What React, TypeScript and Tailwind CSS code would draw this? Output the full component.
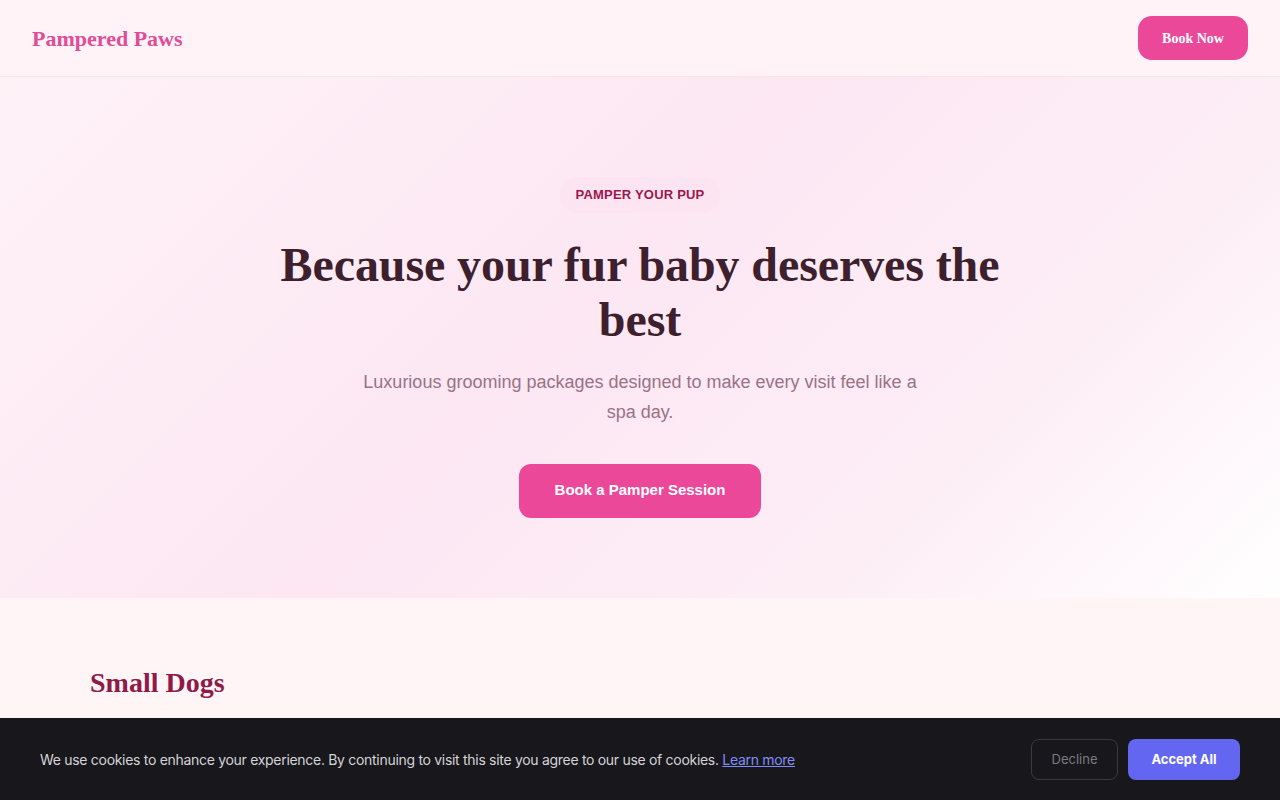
export default function App() {
  const serif = { fontFamily: '"Liberation Serif", "Times New Roman", serif' };
  const sans = { fontFamily: '"Liberation Sans", Arial, sans-serif' };
  return (
    <div className="min-h-screen w-full bg-[#fff5f7] relative overflow-hidden" style={sans}>
      <header className="h-[77px] flex items-center justify-between px-8 bg-[#fff3f7] border-b border-[#f6e6ec]">
        <div className="text-[22px] font-bold text-[#e04d97]" style={serif}>Pampered Paws</div>
        <button className="h-[44px] w-[110px] rounded-[14px] bg-[#ec4899] text-white text-[14px] font-bold" style={serif}>Book Now</button>
      </header>
      <section className="h-[521px] flex flex-col items-center pt-[100px] bg-[linear-gradient(135deg,#fff2f7_0%,#fce7f3_45%,#fdeef6_75%,#ffffff_100%)]">
        <div className="px-4 py-[8px] rounded-full bg-[#fce5f0] text-[13px] font-bold text-[#9d174d] tracking-[0.2px]">PAMPER YOUR PUP</div>
        <h1 className="mt-[24px] w-[760px] text-center text-[48px] leading-[55px] font-bold tracking-[-0.1px] text-[#3d1f2e]" style={serif}>Because your fur baby deserves the best</h1>
        <p className="mt-[20px] w-[570px] text-center text-[18px] leading-[30px] text-[#9a7384]">Luxurious grooming packages designed to make every visit feel like a spa day.</p>
        <button className="mt-[37px] h-[54px] w-[242px] rounded-[12px] bg-[#ec4899] text-white text-[15px] font-bold">Book a Pamper Session</button>
      </section>
      <section className="px-[90px] pt-[68px] h-[300px]">
        <h2 className="text-[28px] font-bold text-[#8f1a48] leading-[34px]" style={serif}>Small Dogs</h2>
      </section>
      <div className="fixed left-0 right-0 bottom-0 h-[82px] bg-[#18171c] flex items-center justify-between px-10" style={{ fontFamily: 'Inter, "Liberation Sans", sans-serif' }}>
        <p className="text-[14px] text-[#d4d4d8] tracking-[-0.3px] pt-[1px]">
          We use cookies to enhance your experience. By continuing to visit this site you agree to our use of cookies.{" "}
          <a className="text-[#818cf8] underline" href="#">Learn more</a>
        </p>
        <div className="flex gap-[10px] pt-[1px]">
          <button className="h-[41px] w-[87px] rounded-[8px] border border-[#3a3a40] text-[#7a7a82] text-[13px]">Decline</button>
          <button className="h-[41px] w-[112px] rounded-[8px] bg-[#6366f1] text-white text-[13px] font-bold">Accept All</button>
        </div>
      </div>
    </div>
  );
}
